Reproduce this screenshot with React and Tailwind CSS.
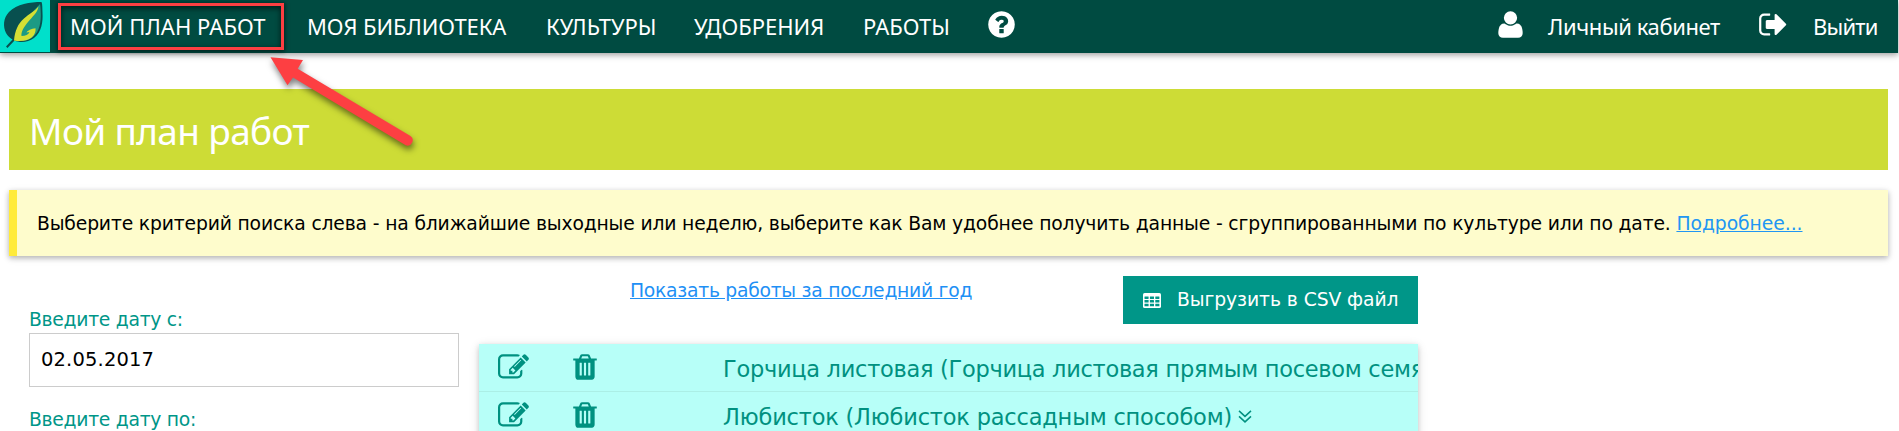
import React from "react";

const ICONS = {
  question:
    "M1024 1376v-192q0-14-9-23t-23-9h-192q-14 0-23 9t-9 23v192q0 14 9 23t23 9h192q14 0 23-9t9-23zm256-672q0-88-55.500-163t-138.500-116-170-41q-243 0-371 213-15 24 8 42l132 100q7 6 19 6 16 0 25-12 53-68 86-92 34-24 86-24 48 0 85.500 26t37.500 59q0 38-20 61t-68 45q-63 28-115.500 86.500t-52.500 125.500v36q0 14 9 23t23 9h192q14 0 23-9t9-23q0-19 21.500-49.500t54.500-49.500q32-18 49-28.500t46-35 44.500-48 28-60.500 12.500-81zm384 192q0 209-103 385.500t-279.500 279.500-385.500 103-385.500-103-279.500-279.500-103-385.500 103-385.500 279.500-279.500 385.500-103 385.500 103 279.500 279.500 103 385.500z",
  user:
    "M1600 1405q0 120-73 189.500t-194 69.500h-874q-121 0-194-69.500t-73-189.500q0-53 3.500-103.500t14-109 26.500-108.500 43-97.500 62-81 85.500-53.500 111.500-20q9 0 42 21.500t74.500 48 108 48 133.500 21.500 133.500-21.500 108-48 74.500-48 42-21.500q61 0 111.500 20t85.500 53.500 62 81 43 97.500 26.500 108.500 14 109 3.500 103.500zm-320-893q0 159-112.500 271.500t-271.500 112.500-271.500-112.500-112.500-271.500 112.500-271.500 271.500-112.500 271.500 112.500 112.500 271.500z",
  signOut:
    "M704 1440q0 4 1 20t.5 26.500-3 23.500-10 19.500-20.500 6.500h-320q-119 0-203.500-84.500t-84.500-203.500v-704q0-119 84.500-203.500t203.500-84.500h320q13 0 22.500 9.500t9.500 22.500q0 4 1 20t.5 26.500-3 23.500-10 19.500-20.500 6.500h-320q-66 0-113 47t-47 113v704q0 66 47 113t113 47h312l11.500 1 11.500 3 8 5.500 7 9 2 13.500zm928-544q0 26-19 45l-544 544q-19 19-45 19t-45-19-19-45v-288h-448q-26 0-45-19t-19-45v-384q0-26 19-45t45-19h448v-288q0-26 19-45t45-19 45 19l544 544q19 19 19 45z",
  edit:
    "M888 1184l116-116-152-152-116 116v56h96v96h56zm440-720q-16-16-33 1l-350 350q-17 17-1 33t33-1l350-350q17-17 1-33zm80 594v190q0 119-84.500 203.500t-203.500 84.500h-832q-119 0-203.500-84.500t-84.500-203.500v-832q0-119 84.500-203.500t203.500-84.500h832q63 0 117 25 15 7 18 23 3 17-9 29l-49 49q-14 14-32 8-23-6-45-6h-832q-66 0-113 47t-47 113v832q0 66 47 113t113 47h832q66 0 113-47t47-113v-126q0-13 9-22l64-64q15-15 35-7t20 29zm-96-738l288 288-672 672h-288v-288zm444 132l-92 92-288-288 92-92q28-28 68-28t68 28l152 152q28 28 28 68t-28 68z",
  trash:
    "M704 1376v-704q0-14-9-23t-23-9h-64q-14 0-23 9t-9 23v704q0 14 9 23t23 9h64q14 0 23-9t9-23zm256 0v-704q0-14-9-23t-23-9h-64q-14 0-23 9t-9 23v704q0 14 9 23t23 9h64q14 0 23-9t9-23zm256 0v-704q0-14-9-23t-23-9h-64q-14 0-23 9t-9 23v704q0 14 9 23t23 9h64q14 0 23-9t9-23zm-544-992h448l-48-117q-7-9-17-11h-317q-10 2-17 11zm928 32v64q0 14-9 23t-23 9h-96v948q0 83-47 143.500t-113 60.500h-832q-66 0-113-58.500t-47-141.500v-952h-96q-14 0-23-9t-9-23v-64q0-14 9-23t23-9h309l70-167q15-37 54-63t79-26h320q40 0 79 26t54 63l70 167h309q14 0 23 9t9 23z",
};

function Icon({ name, className }) {
  return (
    <svg viewBox="0 0 1792 1792" fill="currentColor" className={className}>
      <path d={ICONS[name]} />
    </svg>
  );
}

function TableIcon({ className }) {
  return (
    <svg viewBox="0 0 18 15" className={className}>
      <rect width="18" height="15" rx="1.6" fill="#fff" />
      <g fill="#009688">
        {[3.4, 7.1, 10.8].map((y) =>
          [1.5, 6.9, 12.3].map((x) => <rect key={x + "-" + y} x={x} y={y} width="4.1" height="2.5" rx=".3" />)
        )}
      </g>
    </svg>
  );
}

function Logo() {
  return (
    <svg viewBox="0 0 50 52" className="h-[52px] w-[50px] shrink-0 bg-[#00e0cb]">
      <path d="M41.500 2C30 2 17 4 9 12 3 18 3 27 6 33c1.500 3 4 5 6.500 6.500L6 46.500l1.500 1.500 7-7.500C20 43 28 42.500 34 38c8-6 9-17 8.500-25C42.300 8 42.500 4 41.500 2z" fill="#08504f" />
      <path d="M40 4C35 10 24 18 16 39c6 3 12.500 2 17-2 7-6 8-15.500 7.800-23.500-.1-4-.3-7-.8-9.500z" fill="#1c9a84" />
      <path d="M14 40.500C15 30 18 24 24 18.500 29 14 35 11 38.500 6.500 37.500 13 32 17 28 22c-4.500 5.500-7 10-6.500 14 4 0 7-1.500 8-4l-3 .5c1-2 5-3.800 9-4.300C36.500 36 28.500 43 14 40.500z" fill="#d5df34" />
    </svg>
  );
}

function Row({ title, spacing, arrow }) {
  return (
    <li className="flex h-12 items-start border-b border-[#abefe6] text-[#009180]">
      <Icon name="edit" className="ml-[19px] mt-2 size-[31px] shrink-0" />
      <Icon name="trash" className="ml-[41px] mt-2 size-[30px] shrink-0" />
      <span className={"ml-[123px] mt-[1px] whitespace-nowrap text-[22.5px] leading-[48px] " + spacing}>{title}</span>
      {arrow && (
        <svg viewBox="0 0 14 13" className="ml-[6px] mt-[18px] h-[13px] w-[14px] shrink-0" fill="none" stroke="currentColor" strokeWidth="1.500">
          <path d="M1 .9l6 5.500 6-5.500M1 6.400l6 5.500 6-5.500" />
        </svg>
      )}
    </li>
  );
}

export default function App() {
  return (
    <div className="relative h-[431px] overflow-hidden bg-white font-['DejaVu_Sans',Verdana,sans-serif] text-black">
      <header className="mr-px flex h-[53px] bg-[#004b41] font-['Noto_Sans','Segoe_UI',sans-serif] text-[22px] leading-[52px] text-white shadow-[0_2px_5px_0_rgba(0,0,0,0.25),0_2px_8px_0_rgba(0,0,0,0.15)]">
        <Logo />
        <nav className="flex flex-1 whitespace-nowrap">
          <a className="ml-[8px] mt-[3px] h-[47px] w-[226px] border-3 border-[#fd3f42] pl-[9px] leading-[40px] tracking-[0.05px] shadow-[0_1px_4px_1px_rgba(0,0,0,0.5),inset_0_2px_5px_1px_rgba(0,0,0,0.5)]">МОЙ ПЛАН РАБОТ</a>
          <a className="ml-[23px] w-[239px] tracking-[-0.1px]">МОЯ БИБЛИОТЕКА</a>
          <a className="w-[148px]">КУЛЬТУРЫ</a>
          <a className="w-[169px]">УДОБРЕНИЯ</a>
          <a className="w-[123px]">РАБОТЫ</a>
          <Icon name="question" className="mt-[9px] size-[31px]" />
        </nav>
        <Icon name="user" className="mt-[8.500px] size-[31px]" />
        <a className="ml-[22px] w-[210px] whitespace-nowrap leading-[53px] tracking-[-0.4px]">Личный кабинет</a>
        <Icon name="signOut" className="mt-[8.500px] size-[31px]" />
        <a className="ml-[24px] w-[85px] leading-[53px] tracking-[-0.8px]">Выйти</a>
      </header>

      <h1 className="ml-[9px] mr-[11px] mt-[36px] h-[81px] bg-[#cddc36] pl-5 font-['Noto_Sans','Segoe_UI',sans-serif] text-[37px] leading-[84px] tracking-[-0.65px] text-white">Мой план работ</h1>

      <p className="ml-[9px] mr-[11px] mt-5 h-[66px] whitespace-nowrap border-l-8 border-[#ffeb3b] bg-[#fefccc] pl-5 text-[18.75px] leading-[68px] tracking-[-0.16px] shadow-[0_2px_5px_0_rgba(0,0,0,0.22),0_2px_8px_0_rgba(0,0,0,0.12)]">
        Выберите критерий поиска слева - на ближайшие выходные или неделю, выберите как Вам удобнее получить данные - сгруппированными по культуре или по дате.{" "}
        <a className="tracking-[-0.05px] text-[#2196f3] underline">Подробнее...</a>
      </p>

      <main className="flex text-[18.75px]">
        <form className="ml-[29px] mt-[49px] flex w-[430px] flex-col text-[#009688]">
          <label className="h-7 leading-[30px] tracking-[-0.28px]">Введите дату с:</label>
          <div className="h-[54px] border border-[#ccc] pl-[11px] text-[19.500px] leading-[52px] tracking-[0.15px] text-black">02.05.2017</div>
          <label className="mt-[18px] h-7 leading-[30px] tracking-[-0.28px]">Введите дату по:</label>
        </form>
        <section className="ml-5 mt-5 w-[939px]">
          <div className="flex h-12 justify-between">
            <a className="ml-[151px] leading-[30px] tracking-[-0.27px] text-[#1e90f5] underline">Показать работы за последний год</a>
            <button className="flex w-[295px] items-center whitespace-nowrap bg-[#009688] pl-5 tracking-[-0.08px] text-white">
              <TableIcon className="mr-4 h-[15px] w-[18px]" />
              Выгрузить в CSV файл
            </button>
          </div>
          <ul className="mt-5 h-[120px] overflow-hidden bg-[#b7fff8] shadow-[0_2px_5px_0_rgba(0,0,0,0.16),0_2px_10px_0_rgba(0,0,0,0.12)]">
            <Row title="Горчица листовая (Горчица листовая прямым посевом семян)" spacing="tracking-[-0.29px]" />
            <Row title="Любисток (Любисток рассадным способом)" spacing="tracking-[-0.2px]" arrow />
          </ul>
        </section>
      </main>

      <svg viewBox="0 0 160 110" className="absolute left-[262px] top-[48px] h-[110px] w-[160px] drop-shadow-[1px_4px_3px_rgba(0,0,0,0.5)]">
        <path d="M8.500 9.300L41 12l-5.300 8.800L148.500 88a5.300 5.300 0 0 1-4.800 9.300L31 29.500l-5.500 7.700z" fill="#fd3f42" />
      </svg>
    </div>
  );
}
